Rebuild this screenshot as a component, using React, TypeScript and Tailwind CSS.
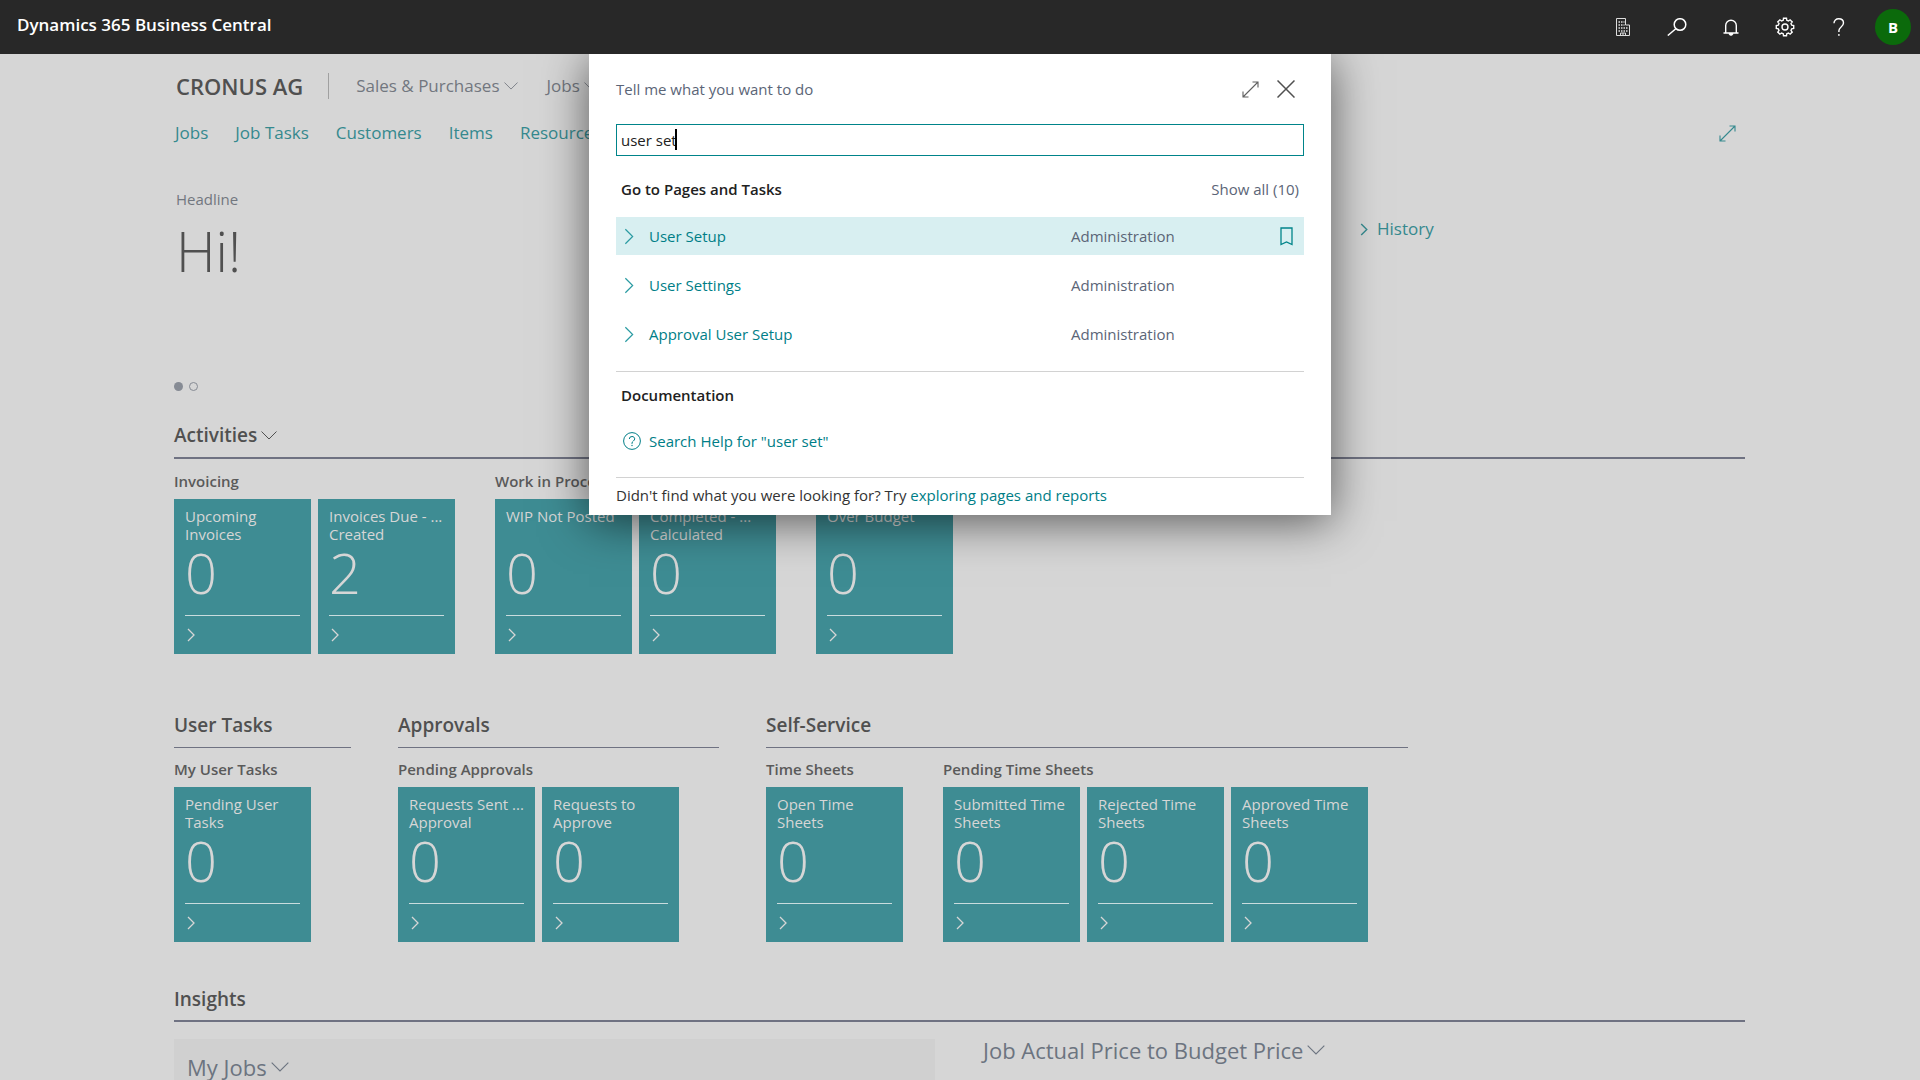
import { useState } from "react"

interface CueGroup {
  title: string
  tiles: { lines: string[]; value: number }[]
}

const ACTIVITIES: CueGroup[] = [
  {
    title: "Invoicing",
    tiles: [
      { lines: ["Upcoming", "Invoices"], value: 0 },
      { lines: ["Invoices Due - ...", "Created"], value: 2 },
    ],
  },
  {
    title: "Work in Process",
    tiles: [
      { lines: ["WIP Not Posted"], value: 0 },
      { lines: ["Completed - ...", "Calculated"], value: 0 },
    ],
  },
  { title: "Jobs", tiles: [{ lines: ["Over Budget"], value: 0 }] },
]

const SECTIONS: { title: string; groups: CueGroup[] }[] = [
  {
    title: "User Tasks",
    groups: [{ title: "My User Tasks", tiles: [{ lines: ["Pending User", "Tasks"], value: 0 }] }],
  },
  {
    title: "Approvals",
    groups: [
      {
        title: "Pending Approvals",
        tiles: [
          { lines: ["Requests Sent ...", "Approval"], value: 0 },
          { lines: ["Requests to", "Approve"], value: 0 },
        ],
      },
    ],
  },
  {
    title: "Self-Service",
    groups: [
      { title: "Time Sheets", tiles: [{ lines: ["Open Time", "Sheets"], value: 0 }] },
      {
        title: "Pending Time Sheets",
        tiles: [
          { lines: ["Submitted Time", "Sheets"], value: 0 },
          { lines: ["Rejected Time", "Sheets"], value: 0 },
          { lines: ["Approved Time", "Sheets"], value: 0 },
        ],
      },
    ],
  },
]

const NAV_LINKS = ["Jobs", "Job Tasks", "Customers", "Items", "Resources"]

const RESULTS = [
  { name: "User Setup", category: "Administration" },
  { name: "User Settings", category: "Administration" },
  { name: "Approval User Setup", category: "Administration" },
]

function ChevronDown({ className }: { className?: string }) {
  return (
    <svg viewBox="0 0 16 9" fill="none" stroke="currentColor" strokeWidth="1" className={className}>
      <path d="M0.5 0.5 8 8 15.5 0.5" />
    </svg>
  )
}

function ChevronRight({ className, strokeWidth = 1.5 }: { className?: string; strokeWidth?: number }) {
  return (
    <svg viewBox="0 0 8 14" fill="none" stroke="currentColor" strokeWidth={strokeWidth} className={className}>
      <path d="M1 1 7 7 1 13" />
    </svg>
  )
}

function ExpandIcon({ className }: { className?: string }) {
  return (
    <svg viewBox="0 0 17 17" fill="none" stroke="currentColor" strokeWidth="1.1" className={className}>
      <path d="M1 16 16 1M10.5 1H16v5.5M1 10.5V16h5.5" />
    </svg>
  )
}

function BuildingIcon() {
  return (
    <svg viewBox="0 0 14 18" className="w-[14px] h-[18px]" fill="none" stroke="currentColor">
      <path d="M0.5 17.5V0.5h9v6.5h4v10.5z" />
      <path d="M2.5 4h6M2.5 7h6M2.5 10h9M2.5 13h9" strokeWidth="1.5" strokeDasharray="1.5 1" />
      <path d="M4.5 17.5v-2.5h5v2.5M7 15v2.5" />
    </svg>
  )
}

function SearchIcon() {
  return (
    <svg viewBox="0 0 20 18" className="w-5 h-[18px]" fill="none" stroke="currentColor" strokeWidth="1.5">
      <circle cx="13" cy="6.5" r="5.8" />
      <path d="M8.8 10.8 0.8 17.5" />
    </svg>
  )
}

function BellIcon() {
  return (
    <svg viewBox="0 0 16 17" className="w-4 h-[17px]" fill="none" stroke="currentColor" strokeWidth="1.4">
      <path d="M0.5 14h15M2.7 14V6.5a5.3 5.3 0 0 1 10.6 0V14" />
      <path d="M6 14.5a2 1.8 0 0 0 4 0z" fill="currentColor" strokeWidth="1" />
    </svg>
  )
}

// eight square teeth around a ring, with a small hub
function GearIcon() {
  return (
    <svg viewBox="-10 -10 20 20" className="w-5 h-5" fill="none" stroke="currentColor" strokeWidth="1.4">
      <path d="M-1.8-6.7-1.5-8.7H1.5L1.8-6.7 3.5-6 5.1-7.2 7.2-5.1 6-3.5 6.7-1.8 8.7-1.5V1.5L6.7 1.8 6 3.5 7.2 5.1 5.1 7.2 3.5 6 1.8 6.7 1.5 8.7H-1.5L-1.8 6.7-3.5 6-5.1 7.2-7.2 5.1-6 3.5-6.7 1.8-8.7 1.5V-1.5L-6.7-1.8-6-3.5-7.2-5.1-5.1-7.2-3.5-6z" />
      <circle r="3" />
    </svg>
  )
}

function HelpIcon() {
  return (
    <svg viewBox="0 0 12 18" className="w-3 h-[18px]" fill="none" stroke="currentColor" strokeWidth="1.4">
      <path d="M1 5.2A4.6 4.4 0 0 1 5.7 0.8c2.8 0 4.8 1.7 4.8 4.3 0 2-1 2.9-2.6 4.2-1.5 1.2-2 2-2 3.5v1.2" />
      <circle cx="5.9" cy="16.9" r="0.9" fill="currentColor" stroke="none" />
    </svg>
  )
}

function HelpCircleIcon() {
  return (
    <svg viewBox="0 0 18 18" className="w-[18px] h-[18px]" fill="none" stroke="currentColor">
      <circle cx="9" cy="9" r="8.4" />
      <path d="M6.3 7A2.7 2.5 0 0 1 9 4.5c1.6 0 2.7 1 2.7 2.4 0 1.9-2.7 2.3-2.7 4.2v.8" />
      <circle cx="9" cy="13.5" r="0.7" fill="currentColor" stroke="none" />
    </svg>
  )
}

function Tile({ lines, value }: { lines: string[]; value: number }) {
  return (
    <button className="flex flex-col w-[137px] h-[155px] px-[11px] pt-2 bg-[#3e8c93] text-[#d6d6d6] text-left">
      <span className="h-9 text-[15px] leading-[18px] whitespace-nowrap">
        {lines.map((line) => (
          <span key={line} className="block">
            {line}
          </span>
        ))}
      </span>
      <span className="text-[56px] leading-[58px] font-light">{value}</span>
      <span className="w-full mt-[14px] border-t border-[#c9dcde]" />
      <ChevronRight className="w-2 h-[14px] ml-0.5 mt-[12px]" strokeWidth={1.3} />
    </button>
  )
}

function Group({ title, tiles }: CueGroup) {
  return (
    <div>
      <h3 className="text-[15px] leading-6 font-semibold whitespace-nowrap text-[#5a5a5a]">{title}</h3>
      <div className="flex gap-[7px] mt-1.5">
        {tiles.map((tile) => (
          <Tile key={tile.lines.join(" ")} {...tile} />
        ))}
      </div>
    </div>
  )
}

function TopBar() {
  return (
    <header className="relative z-20 flex items-center justify-between h-[54px] pl-[17px] pr-[9px] bg-[#282828] text-white">
      <h1 className="mb-1 text-[17px] leading-6 font-semibold">Dynamics 365 Business Central</h1>
      <div className="flex items-center">
        <button aria-label="Environments" className="flex justify-center w-[54px] text-[#dddddd]">
          <BuildingIcon />
        </button>
        <button aria-label="Search" className="flex justify-center w-[54px]">
          <SearchIcon />
        </button>
        <button aria-label="Notifications" className="flex justify-center w-[54px]">
          <BellIcon />
        </button>
        <button aria-label="Settings" className="flex justify-center w-[54px]">
          <GearIcon />
        </button>
        <button aria-label="Help" className="flex justify-center w-[54px]">
          <HelpIcon />
        </button>
        <button className="w-9 h-9 ml-[9px] rounded-full bg-[#0b6a0b] text-[15px] font-bold">B</button>
      </div>
    </header>
  )
}

function SearchDialog() {
  const [query, setQuery] = useState("user set")

  return (
    <div
      role="dialog"
      aria-labelledby="tell-me"
      className="absolute z-10 top-0 left-1/2 -translate-x-1/2 w-[742px] px-[27px] pt-[23px] pb-2 bg-white text-[15px] leading-6 text-[#5b6577] shadow-[0_6px_44px_rgba(0,0,0,0.6)]"
    >
      <div className="flex items-center h-6">
        <label id="tell-me" htmlFor="query" className="flex-1">
          Tell me what you want to do
        </label>
        <button aria-label="Expand" className="text-[#606060]">
          <ExpandIcon className="w-[17px] h-[17px]" />
        </button>
        <button aria-label="Close" className="ml-[18px] mr-[9px] text-[#505050]">
          <svg viewBox="0 0 18 18" className="w-[18px] h-[18px]" fill="none" stroke="currentColor" strokeWidth="1.5">
            <path d="M0.5 0.5 17.5 17.5M17.5 0.5 0.5 17.5" />
          </svg>
        </button>
      </div>

      <div className="relative mt-[23px]">
        <input
          id="query"
          type="text"
          value={query}
          onChange={(e) => setQuery(e.target.value)}
          className="block w-full h-8 px-1 border border-[#00848a] text-[#212121] outline-none"
        />
        {/* Caret */}
        <span className="absolute left-[59px] top-[5px] w-0.5 h-[21px] bg-black" />
      </div>

      <div className="flex justify-between mt-[21px] px-[5px]">
        <h2 className="font-semibold text-[#212121]">Go to Pages and Tasks</h2>
        <button>Show all (10)</button>
      </div>

      <ul className="flex flex-col gap-[11px] mt-4">
        {RESULTS.map((result, index) => (
          <li
            key={result.name}
            className={`flex items-center h-[38px] pl-2 pr-[11px] ${index === 0 ? "bg-[#d8eff1]" : ""}`}
          >
            <ChevronRight className="w-[10px] h-[17px] text-[#2a9ba2]" strokeWidth={1} />
            <a href="#" className="w-[422px] ml-[15px] text-[#007e87]">
              {result.name}
            </a>
            <span className="flex-1">{result.category}</span>
            {index === 0 && (
              <button aria-label="Bookmark" className="text-[#00848a]">
                <svg viewBox="0 0 13 19" className="w-[13px] h-[19px]" fill="none" stroke="currentColor" strokeWidth="1.3">
                  <path d="M1 1h11v16.5L6.5 15 1 17.5z" />
                </svg>
              </button>
            )}
          </li>
        ))}
      </ul>

      <div className="mt-[18px] pt-[11px] border-t border-[#d2d2d2]">
        <h2 className="px-[5px] font-semibold text-[#212121]">Documentation</h2>
        <a href="#" className="flex items-center gap-2 mt-[22px] pl-[7px] text-[#007e87]">
          <HelpCircleIcon />
          Search Help for "{query}"
        </a>
      </div>

      <p className="mt-6 pt-[5px] border-t border-[#d2d2d2] text-[#333333]">
        Didn't find what you were looking for? Try{" "}
        <a href="#" className="text-[#007e87]">
          exploring pages and reports
        </a>
      </p>
    </div>
  )
}

export default function App() {
  return (
    <div className="h-screen overflow-hidden bg-[#d6d6d6] font-['Open_Sans',sans-serif] text-[#505050]">
      <TopBar />

      <main className="relative pl-[174px] pr-[175px]">
        <SearchDialog />

        {/* Role center header */}
        <div className="flex items-center pt-[19px] text-[17px] leading-[26px] text-[#72777f]">
          <span className="pl-0.5 pr-[25px] border-r border-[#a0a0a0] text-[22px] font-semibold text-[#505050]">
            CRONUS AG
          </span>
          <button className="flex items-center gap-1 ml-[27px]">
            Sales & Purchases
            <ChevronDown className="w-[14px] h-2" />
          </button>
          <button className="flex items-center gap-1 ml-[29px]">
            Jobs
            <ChevronDown className="w-[14px] h-2" />
          </button>
        </div>

        <nav className="flex items-center gap-[27px] mt-[22px] pl-px text-[17px] leading-6 text-[#35898e]">
          {NAV_LINKS.map((link) => (
            <a key={link} href="#">
              {link}
            </a>
          ))}
          <button aria-label="Expand actions" className="ml-auto mr-[9px]">
            <ExpandIcon className="w-[17px] h-[17px]" />
          </button>
        </nav>

        <div className="flex mt-[42px] pl-0.5">
          <div className="w-[1184px]">
            <p className="text-[15px] leading-6 text-[#72777f]">Headline</p>
            <p className="mt-2 text-[55px] leading-[64px] font-light">Hi!</p>
          </div>
          <button className="flex items-center self-start gap-[9px] mt-[30px] text-[17px] leading-6 text-[#35898e]">
            <ChevronRight className="w-2 h-[13px]" />
            History
          </button>
        </div>

        <div className="flex gap-1.5 mt-[99px]">
          <span className="size-[9px] rounded-full bg-[#868b94]" />
          <span className="size-[9px] rounded-full border border-[#868b94]" />
        </div>

        <section className="mt-[30px]">
          <h2 className="flex items-center gap-1 pb-2 border-b-2 border-[#6f7282] text-[19px] leading-7 font-semibold">
            Activities
            <ChevronDown className="w-4 h-[9px]" />
          </h2>
          <div className="flex gap-10 mt-[10px]">
            {ACTIVITIES.map((group) => (
              <Group key={group.title} {...group} />
            ))}
          </div>
        </section>

        <div className="flex gap-[47px] mt-[57px]">
          {SECTIONS.map((section) => (
            <section key={section.title}>
              <h2 className="pb-2 border-b border-[#6f7282] text-[19px] leading-7 font-semibold">{section.title}</h2>
              <div className="flex gap-10 mt-[9px] pr-10">
                {section.groups.map((group) => (
                  <Group key={group.title} {...group} />
                ))}
              </div>
            </section>
          ))}
        </div>

        <section className="mt-[43px]">
          <h2 className="pb-[7px] border-b-2 border-[#6f7282] text-[19px] leading-7 font-semibold">Insights</h2>
          <div className="flex items-start gap-12 mt-3 text-[22px] leading-8 text-[#6c7480]">
            <div className="w-[761px] h-40 mt-[5px] px-[13px] pt-3 bg-[#d0d0d0]">
              <button className="flex items-center gap-1">
                My Jobs
                <ChevronDown className="w-[18px] h-[10px]" />
              </button>
            </div>
            <button className="flex items-center gap-1">
              Job Actual Price to Budget Price
              <ChevronDown className="w-[18px] h-[10px]" />
            </button>
          </div>
        </section>
      </main>
    </div>
  )
}
